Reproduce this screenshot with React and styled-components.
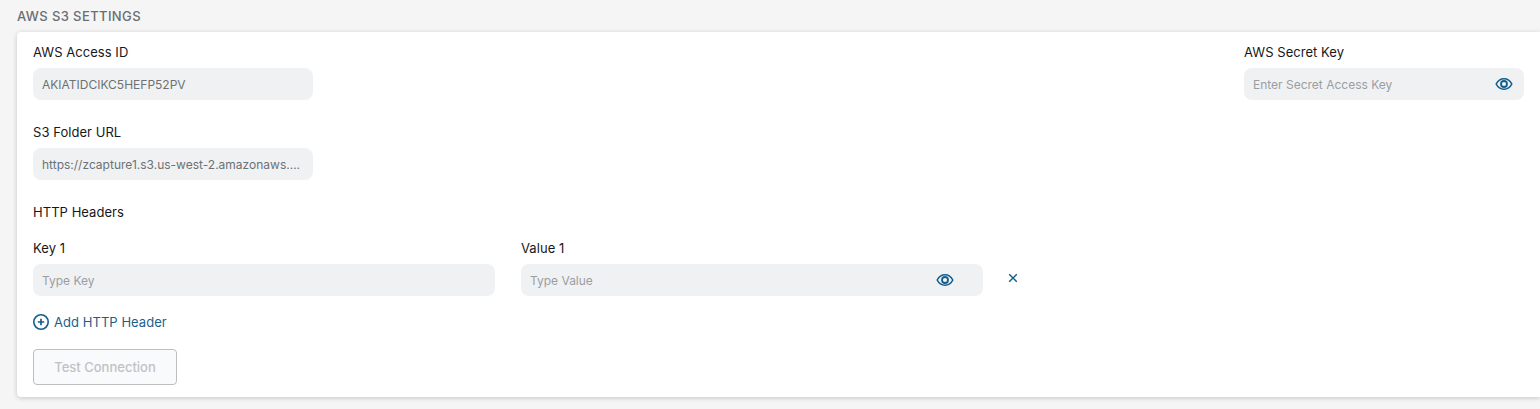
import React from "react";
import styled, { createGlobalStyle } from "styled-components";

const Global = createGlobalStyle`
  html, body { margin: 0; padding: 0; background: #f5f5f5; }
  body { font-family: Inter, "Liberation Sans", sans-serif; overflow: hidden; }
  * { box-sizing: border-box; }
`;

const Page = styled.div`
  width: 1540px;
  height: 409px;
  padding: 9px 0 0 17px;
  background: #f5f5f5;
`;

const SectionTitle = styled.h2`
  margin: 0 0 8px;
  height: 15px;
  font-size: 13px;
  line-height: 15px;
  font-weight: 500;
  letter-spacing: 0.4px;
  color: #6a6e73;
`;

const Card = styled.section`
  width: 1523px;
  height: 365px;
  padding: 12px 16px 12px 16px;
  background: #fff;
  border-radius: 4px 0 0 4px;
  box-shadow: 0 1px 5px rgba(0, 0, 0, 0.2);
`;

const TopRow = styled.div`
  display: flex;
  justify-content: space-between;
  margin-bottom: 24px;
`;

const Field = styled.div`
  display: flex;
  flex-direction: column;
  width: ${(p) => p.$width}px;
`;

const Label = styled.label`
  height: 16px;
  margin-bottom: 8px;
  font-size: 13px;
  line-height: 16px;
  font-weight: 400;
  letter-spacing: 0.05px;
  color: #16181b;
`;

const InputBox = styled.div`
  display: flex;
  align-items: center;
  justify-content: space-between;
  height: 32px;
  padding: 0 ${(p) => p.$iconInset || 9}px 0 9px;
  border-radius: 8px;
  background: #f0f1f3;
  font-size: 12px;
  white-space: nowrap;
  overflow: hidden;
  color: ${(p) => (p.$placeholder ? "#9a9ea3" : "#6d7175")};
`;

const EyeButton = styled.span`
  display: flex;
  color: #135e8c;
`;

const SubHeading = styled.div`
  height: 16px;
  margin-bottom: 20px;
  font-size: 13px;
  line-height: 16px;
  font-weight: 400;
  letter-spacing: 0.05px;
  color: #16181b;
`;

const HeaderRow = styled.div`
  display: flex;
  align-items: flex-start;
  gap: 26px;
  margin-bottom: 18px;
`;

const RemoveButton = styled.span`
  display: flex;
  margin: 33px 0 0 -1px;
  color: #135e8c;
`;

const AddLink = styled.div`
  display: flex;
  align-items: center;
  gap: 5px;
  height: 16px;
  margin-bottom: 19px;
  font-size: 13px;
  line-height: 16px;
  font-weight: 400;
  letter-spacing: 0.05px;
  color: #1c5f8a;
`;

const TestButton = styled.button`
  display: block;
  width: 144px;
  height: 36px;
  padding: 0;
  border: 1px solid #bcbec2;
  border-radius: 4px;
  background: #f9fafb;
  font-family: inherit;
  font-size: 13px;
  font-weight: 500;
  color: #c0c2c5;
`;

const Eye = () => (
  <svg width="18" height="18" viewBox="0 0 18 18" fill="none" stroke="currentColor">
    <path d="M1.2 9C3 5.400 5.700 3.800 9 3.800s6 1.600 7.800 5.200c-1.800 3.600-4.500 5.200-7.800 5.200S3 12.600 1.200 9Z" strokeWidth="1.600" />
    <circle cx="9" cy="9" r="3" strokeWidth="1.800" />
  </svg>
);

const Plus = () => (
  <svg width="16" height="16" viewBox="0 0 16 16" fill="none" stroke="#135e8c">
    <circle cx="8" cy="8" r="7.200" strokeWidth="1.600" />
    <path d="M8 4.800v6.400M4.800 8h6.400" strokeWidth="1.700" />
  </svg>
);

const Cross = () => (
  <svg width="10" height="10" viewBox="0 0 10 10" fill="none" stroke="currentColor" strokeWidth="1.400">
    <path d="M1.200 1.200l7.600 7.600M8.800 1.200l-7.600 7.600" />
  </svg>
);

export default function App() {
  return (
    <>
      <Global />
      <Page>
        <SectionTitle>AWS S3 SETTINGS</SectionTitle>
        <Card>
          <TopRow>
            <Field $width={280}>
              <Label>AWS Access ID</Label>
              <InputBox>AKIATIDCIKC5HEFP52PV</InputBox>
            </Field>
            <Field $width={280}>
              <Label>AWS Secret Key</Label>
              <InputBox $placeholder $iconInset={11}>
                Enter Secret Access Key
                <EyeButton><Eye /></EyeButton>
              </InputBox>
            </Field>
          </TopRow>
          <TopRow>
            <Field $width={280}>
              <Label>S3 Folder URL</Label>
              <InputBox>https://zcapture1.s3.us-west-2.amazonaws....</InputBox>
            </Field>
          </TopRow>
          <SubHeading>HTTP Headers</SubHeading>
          <HeaderRow>
            <Field $width={462}>
              <Label>Key 1</Label>
              <InputBox $placeholder>Type Key</InputBox>
            </Field>
            <Field $width={462}>
              <Label>Value 1</Label>
              <InputBox $placeholder $iconInset={29}>
                Type Value
                <EyeButton><Eye /></EyeButton>
              </InputBox>
            </Field>
            <RemoveButton><Cross /></RemoveButton>
          </HeaderRow>
          <AddLink><Plus />Add HTTP Header</AddLink>
          <TestButton disabled>Test Connection</TestButton>
        </Card>
      </Page>
    </>
  );
}
